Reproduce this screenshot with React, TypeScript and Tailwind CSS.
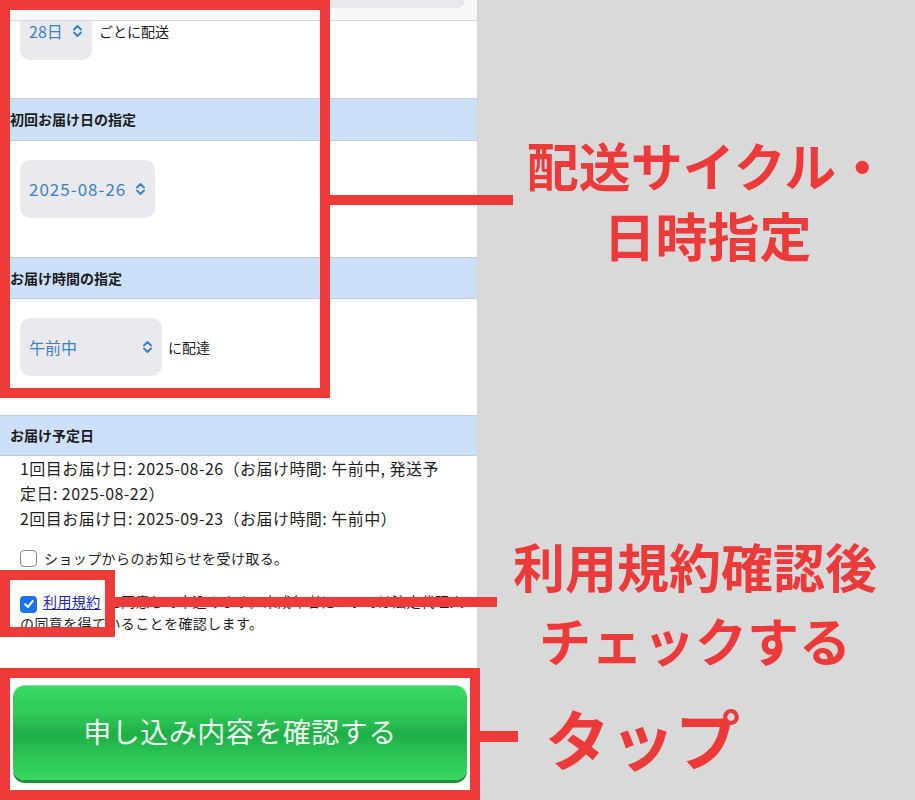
import React from 'react';

const jp = { fontFamily: '"Noto Sans CJK JP", "Noto Sans", sans-serif' };

const UpDown = ({ className = '' }: { className?: string }) => (
  <svg width="11" height="14" viewBox="0 0 11 14" className={className} fill="none">
    <path d="M2 5.5 L5.5 2 L9 5.5 M2 8.5 L5.5 12 L9 8.5" stroke="#3a82c4" strokeWidth="1.9" strokeLinecap="round" strokeLinejoin="round" />
  </svg>
);

const SectionHeader = ({ label, h }: { label: string; h: string }) => (
  <div className={`${h} shrink-0 flex items-center px-[10px] bg-[#cde0fa] border-b border-[#c4ccd8] text-[14px] font-bold text-[#1c1c1c]`}>
    {label}
  </div>
);

export default function App() {
  return (
    <div className="relative w-[915px] h-[800px] overflow-hidden flex bg-[#d9d9d9]" style={jp}>
      {/* 左: スマホ画面 */}
      <div className="w-[478px] h-[800px] shrink-0 bg-white border-r border-[#d4d4d4] flex flex-col">
        {/* 前の行の名残 */}
        <div className="h-[21px] shrink-0 bg-[#f8f8fa] border-b border-[#d6d6dc]">
          <div className="h-[8px] ml-[20px] mr-[12px] bg-[#e8e8ed] rounded-b-[10px]" />
        </div>

        {/* 配送サイクル */}
        <div className="h-[78px] shrink-0 flex items-start px-[20px] border-b border-[#c4ccd8]">
          <div className="w-[72px] h-[39px] bg-[#e9e9ee] rounded-b-[10px] flex items-start justify-between pl-[9px] pr-[9px]">
            <span className="text-[16px] leading-[20px] text-[#3a82c4]">28日</span>
            <UpDown className="mt-[3px]" />
          </div>
          <span className="ml-[7px] text-[14px] leading-[20px] text-[#222]">ごとに配送</span>
        </div>

        <SectionHeader label="初回お届け日の指定" h="h-[42px]" />
        <div className="h-[117px] shrink-0 px-[20px] pt-[19px] border-b border-[#c4ccd8]">
          <div className="w-[135px] h-[58px] bg-[#e9e9ee] rounded-[10px] flex items-center justify-between pl-[9px] pr-[9px]">
            <span className="text-[17px] tracking-[1px] text-[#3a82c4]">2025-08-26</span>
            <UpDown />
          </div>
        </div>

        <SectionHeader label="お届け時間の指定" h="h-[41px]" />
        <div className="h-[117px] shrink-0 flex items-start px-[20px] pt-[19px] border-b border-[#c4ccd8]">
          <div className="w-[142px] h-[58px] bg-[#e9e9ee] rounded-[10px] flex items-center justify-between pl-[9px] pr-[9px]">
            <span className="text-[16px] text-[#3a82c4]">午前中</span>
            <UpDown />
          </div>
          <span className="ml-[6px] mt-[20px] text-[14px] leading-[18px] text-[#222]">に配達</span>
        </div>

        <SectionHeader label="お届け予定日" h="h-[40px]" />
        <div className="px-[20px] pr-[6px] text-[#1f1f1f]">
          <p className="text-[16px] leading-[25px] tracking-[0.45px]">
            1回目お届け日: 2025-08-26（お届け時間: 午前中, 発送予<br />
            定日: 2025-08-22）<br />
            2回目お届け日: 2025-09-23（お届け時間: 午前中）
          </p>

          <label className="mt-[17px] flex items-center gap-[7px] text-[14px] leading-[20px] tracking-[0.4px]">
            <span className="w-[17px] h-[17px] rounded-[4px] border-[1.5px] border-[#8a8a8a] bg-white shrink-0" />
            <span>ショップからのお知らせを受け取る。</span>
          </label>

          <p className="mt-[23px] text-[14px] leading-[20px] tracking-[0.4px]">
            <span className="inline-flex align-[-3px] w-[17px] h-[17px] rounded-[4px] bg-[#1a73e8] items-center justify-center mr-[6px]">
              <svg width="12" height="12" viewBox="0 0 12 12" fill="none">
                <path d="M2.2 6.3 L4.9 9 L9.8 3" stroke="white" strokeWidth="2" strokeLinecap="round" strokeLinejoin="round" />
              </svg>
            </span>
            <a className="text-[#2626c4] underline underline-offset-2">利用規約</a>
            <span className="ml-[6px]">に同意して申込みます。未成年者については法定代理人</span>
            <br />
            の同意を得ていることを確認します。
          </p>
        </div>

        {/* 確認ボタン */}
        <button className="mt-[52px] ml-[13px] w-[454px] h-[95px] rounded-[12px] bg-[linear-gradient(180deg,#3bd966_0%,#2fca58_30%,#1fae48_52%,#2bc655_75%,#38d661_100%)] shadow-[0_3px_0_#1b8f3b,inset_0_1px_0_rgba(255,255,255,0.35)] text-[28px] leading-[34px] pb-[2px] text-[#ecfff0] tracking-[0.5px]">
          申し込み内容を確認する
        </button>
      </div>

      {/* 注釈 */}
      <div className="absolute left-0 top-0 w-[330px] h-[398px] border-[10px] border-[#ef3a3a]" />
      <div className="absolute left-[330px] top-[195px] w-[183px] h-[10px] bg-[#ef3a3a]" />
      <div className="absolute left-[500px] right-0 top-[130px] text-center text-[52px] leading-[70px] font-bold text-[#ec3a3a]">
        配送サイクル・<br />日時指定
      </div>

      <div className="absolute left-0 top-[570px] w-[115px] h-[67px] border-[10px] border-[#ef3a3a]" />
      <div className="absolute left-[115px] top-[597px] w-[382px] h-[10px] bg-[#ef3a3a]" />
      <div className="absolute left-[475px] right-0 top-[529px] text-center text-[52px] leading-[74px] font-bold text-[#ec3a3a]">
        利用規約確認後<br />チェックする
      </div>

      <div className="absolute left-0 top-[668px] w-[480px] h-[132px] border-[10px] border-[#ef3a3a]" />
      <div className="absolute left-[480px] top-[731px] w-[38px] h-[11px] bg-[#ef3a3a]" />
      <div className="absolute left-[545px] top-[697px] text-[65px] leading-[80px] font-bold text-[#ec3a3a]">
        タップ
      </div>
    </div>
  );
}
